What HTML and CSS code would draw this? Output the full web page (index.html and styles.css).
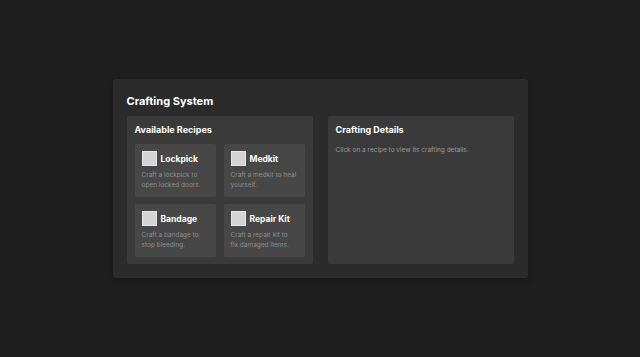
FILE: index.html
```html
<!DOCTYPE html>
<html lang="en">

<head>
    <meta charset="UTF-8">
    <meta name="viewport" content="width=device-width, initial-scale=1.0">
    <title>Crafting System</title>
    <link rel="stylesheet" href="styles.css">
</head>

<body>
    <div class="crafting">
        <h1>Crafting System</h1>
        <div class="columns">
            <div class="panel">
                <h2>Available Recipes</h2>
                <div class="recipes">
                    <div class="recipe">
                        <div class="recipe-head">
                            <span class="icon"></span>
                            <h3>Lockpick</h3>
                        </div>
                        <p>Craft a lockpick to open locked doors.</p>
                    </div>
                    <div class="recipe">
                        <div class="recipe-head">
                            <span class="icon"></span>
                            <h3>Medkit</h3>
                        </div>
                        <p>Craft a medkit to heal yourself.</p>
                    </div>
                    <div class="recipe">
                        <div class="recipe-head">
                            <span class="icon"></span>
                            <h3>Bandage</h3>
                        </div>
                        <p>Craft a bandage to stop bleeding.</p>
                    </div>
                    <div class="recipe">
                        <div class="recipe-head">
                            <span class="icon"></span>
                            <h3>Repair Kit</h3>
                        </div>
                        <p>Craft a repair kit to fix damaged items.</p>
                    </div>
                </div>
            </div>
            <div class="panel">
                <h2>Crafting Details</h2>
                <p class="hint">Click on a recipe to view its crafting details.</p>
            </div>
        </div>
    </div>
</body>

</html>
```

FILE: styles.css
```css
body {
    font-family: 'Inter', sans-serif;
    background-color: #1f1f1f;
    margin: 0;
    padding: 0;
    display: flex;
    align-items: center;
    justify-content: center;
    min-height: 100vh;
    color: #fff;
}

.crafting {
    width: 415px;
    box-sizing: border-box;
    background-color: #2b2b2b;
    padding: 14px;
    border-radius: 3px;
    box-shadow: 0 2px 6px rgba(0, 0, 0, 0.3);
}

.crafting h1 {
    margin: 0 0 7px 0;
    font-size: 11px;
    line-height: 16px;
    font-weight: 700;
}

.columns {
    display: grid;
    grid-template-columns: 1fr 1fr;
    gap: 15px;
}

.panel {
    background-color: #3a3a3a;
    border-radius: 2px;
    padding: 8px 8px 7px 8px;
    min-height: 132px;
}

.panel h2 {
    margin: 0 0 8px 0;
    font-size: 9px;
    line-height: 12px;
    font-weight: 700;
}

.recipes {
    display: grid;
    grid-template-columns: 1fr 1fr;
    gap: 7px 8px;
}

.recipe {
    background-color: #474747;
    border-radius: 2px;
    padding: 7px;
    height: 53px;
    box-sizing: border-box;
}

.recipe-head {
    display: flex;
    align-items: center;
    gap: 4px;
    margin-bottom: 5px;
}

.icon {
    width: 15px;
    height: 15px;
    box-sizing: border-box;
    background-color: #d4d4d4;
    border: 1px solid #e6e6e6;
    flex-shrink: 0;
}

.recipe h3 {
    margin: 0;
    font-size: 8.5px;
    font-weight: 700;
}

.recipe p {
    margin: 0 1px 0 0;
    font-size: 6.5px;
    line-height: 9.5px;
    color: #8e8e8e;
}

.hint {
    margin: 10px 0 0 0;
    font-size: 6.5px;
    color: #9a9a9a;
}
```
